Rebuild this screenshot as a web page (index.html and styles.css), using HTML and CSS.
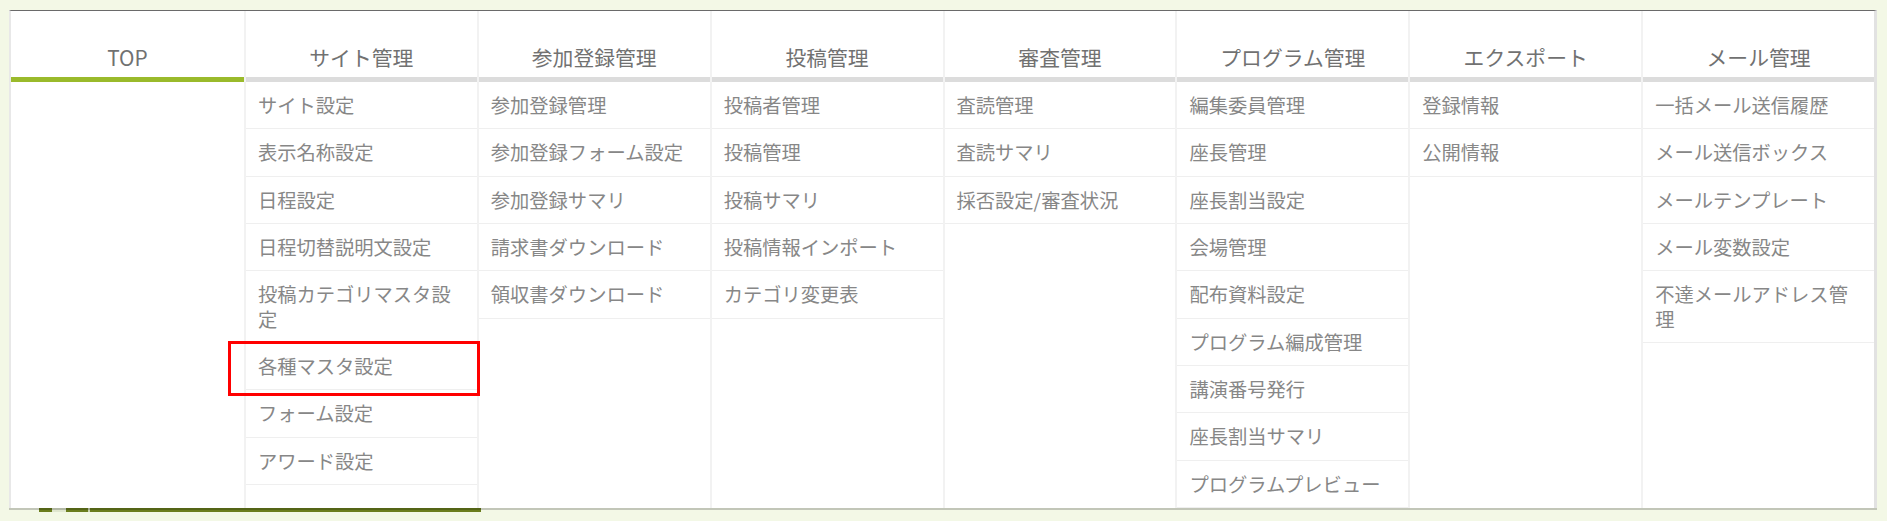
FILE: index.html
```html
<!DOCTYPE html>
<html lang="ja">
<head>
<meta charset="utf-8">
<title>Menu</title>
<link rel="stylesheet" href="styles.css">
</head>
<body>
<div class="page">
  <div class="pagebar">
    <span class="pb-seg pb-a"></span><span class="pb-box"></span><span class="pb-seg pb-b"></span><span class="pb-gap"></span><span class="pb-seg pb-c"></span>
  </div>
  <nav class="menu">
    <div class="col">
      <div class="head">TOP</div>
      <div class="bar bar-active"></div>
    </div>
    <div class="col">
      <div class="head">サイト管理</div>
      <div class="bar"></div>
      <ul class="items">
        <li>サイト設定</li>
        <li>表示名称設定</li>
        <li>日程設定</li>
        <li>日程切替説明文設定</li>
        <li>投稿カテゴリマスタ設定</li>
        <li class="hl">各種マスタ設定</li>
        <li>フォーム設定</li>
        <li>アワード設定</li>
      </ul>
    </div>
    <div class="col">
      <div class="head">参加登録管理</div>
      <div class="bar"></div>
      <ul class="items">
        <li>参加登録管理</li>
        <li>参加登録フォーム設定</li>
        <li>参加登録サマリ</li>
        <li>請求書ダウンロード</li>
        <li>領収書ダウンロード</li>
      </ul>
    </div>
    <div class="col">
      <div class="head">投稿管理</div>
      <div class="bar"></div>
      <ul class="items">
        <li>投稿者管理</li>
        <li>投稿管理</li>
        <li>投稿サマリ</li>
        <li>投稿情報インポート</li>
        <li>カテゴリ変更表</li>
      </ul>
    </div>
    <div class="col">
      <div class="head">審査管理</div>
      <div class="bar"></div>
      <ul class="items">
        <li>査読管理</li>
        <li>査読サマリ</li>
        <li>採否設定/審査状況</li>
      </ul>
    </div>
    <div class="col">
      <div class="head">プログラム管理</div>
      <div class="bar"></div>
      <ul class="items">
        <li>編集委員管理</li>
        <li>座長管理</li>
        <li>座長割当設定</li>
        <li>会場管理</li>
        <li>配布資料設定</li>
        <li>プログラム編成管理</li>
        <li>講演番号発行</li>
        <li>座長割当サマリ</li>
        <li>プログラムプレビュー</li>
      </ul>
    </div>
    <div class="col">
      <div class="head">エクスポート</div>
      <div class="bar"></div>
      <ul class="items">
        <li>登録情報</li>
        <li>公開情報</li>
      </ul>
    </div>
    <div class="col">
      <div class="head">メール管理</div>
      <div class="bar"></div>
      <ul class="items">
        <li>一括メール送信履歴</li>
        <li>メール送信ボックス</li>
        <li>メールテンプレート</li>
        <li>メール変数設定</li>
        <li>不達メールアドレス管理</li>
      </ul>
    </div>
  </nav>
</div>
</body>
</html>
```

FILE: styles.css
```css
html, body {
  margin: 0;
  padding: 0;
}
body {
  background: #f3f8e6;
  font-family: "Noto Sans CJK JP", "Noto Sans", sans-serif;
  width: 1887px;
  height: 521px;
  overflow: hidden;
}
.page {
  position: relative;
  padding: 10px 0 0 9px;
}
.pagebar {
  position: absolute;
  top: 508px;
  left: 39px;
  width: 442px;
  height: 4px;
  display: flex;
  z-index: 0;
}
.pb-seg {
  background: #6a7d1d;
  height: 100%;
}
.pb-a { width: 13px; }
.pb-box { width: 14px; background: #dfe6cf; }
.pb-b { width: 22px; }
.pb-gap { width: 2px; background: #c9d3ae; }
.pb-c { flex: 1; }

.menu {
  position: relative;
  z-index: 1;
  width: 1863px;
  background: #fff;
  border-top: 1px solid #6a6a6a;
  border-left: 2px solid #e8e8e8;
  border-right: 3px solid #e2e2e2;
  box-shadow: 0 2px 0 rgba(0, 0, 0, 0.2);
  display: grid;
  grid-template-columns: repeat(8, 1fr);
}
.col {
  display: flex;
  flex-direction: column;
  min-width: 0;
}
.col + .col {
  border-left: 2px solid #f2f2f2;
}
.head {
  height: 66px;
  box-sizing: border-box;
  display: flex;
  align-items: flex-end;
  justify-content: center;
  padding-bottom: 8px;
  font-size: 20.8px;
  line-height: 24px;
  color: #717171;
}
.bar {
  height: 5px;
  background: #dcdcdc;
}
.bar-active {
  background: #9aba2b;
}
.items {
  list-style: none;
  margin: 0;
  padding: 0;
}
.items li {
  position: relative;
  padding: 11px 12px 11px 12px;
  line-height: 24.33px;
  font-size: 19.3px;
  color: #878787;
  border-bottom: 1px solid #efefef;
}
.items li.hl::after {
  content: "";
  position: absolute;
  top: -2px;
  left: -18px;
  right: -3px;
  bottom: -7px;
  border: 3px solid #ff0000;
  z-index: 2;
}
```
